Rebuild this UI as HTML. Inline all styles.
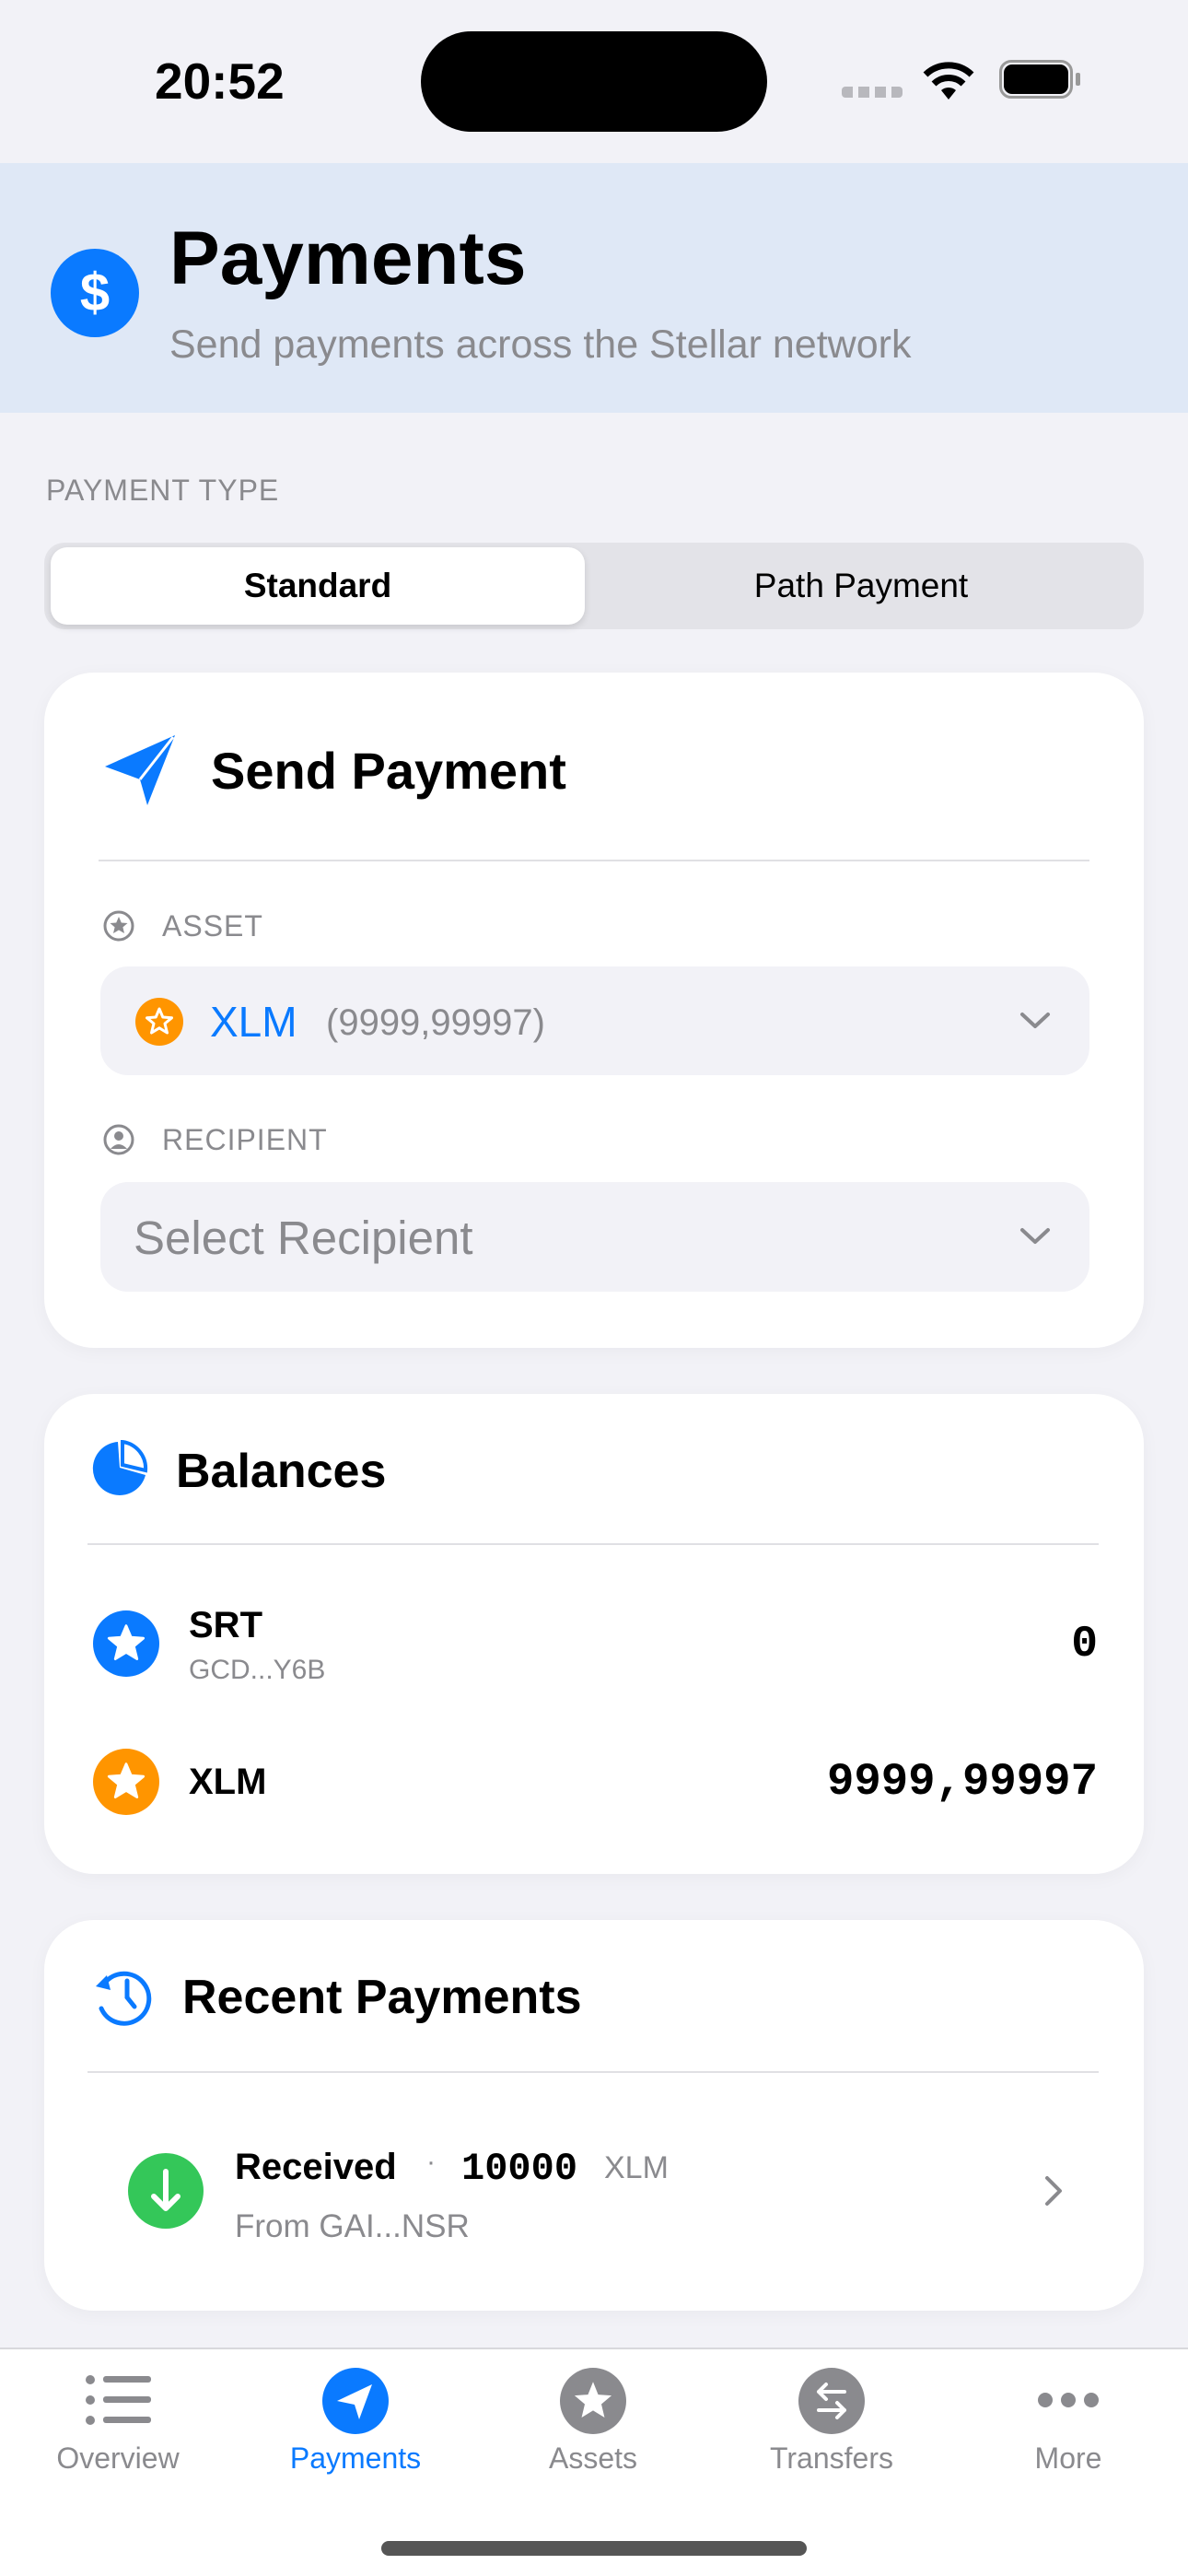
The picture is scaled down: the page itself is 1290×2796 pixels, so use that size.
<!DOCTYPE html>
<html><head><meta charset="utf-8"><style>
*{margin:0;padding:0;box-sizing:border-box}
body{width:1290px;height:2796px;background:#f2f2f7;font-family:"Liberation Sans",sans-serif;position:relative;overflow:hidden;color:#000}
.a{position:absolute}
.card{position:absolute;left:48px;width:1194px;background:#fff;border-radius:54px;box-shadow:0 4px 20px rgba(0,0,0,0.04)}
.lbl{color:#8a8a8e;font-size:32px;letter-spacing:1px}
.field{position:absolute;left:109px;width:1074px;background:#f2f2f7;border-radius:30px}
.mono{font-family:"Liberation Mono",monospace;font-weight:bold}
.tab{position:absolute;top:2650px;width:200px;text-align:center;font-size:32px;color:#8a8a8e}
</style></head><body>
<!-- status bar -->
<div class="a" style="left:168px;top:56px;font-size:55px;font-weight:bold">20:52</div>
<div class="a" style="left:457px;top:34px;width:376px;height:109px;background:#000;border-radius:55px"></div>
<div class="a" style="left:914px;top:94px;width:66px;height:12px;background:repeating-linear-gradient(90deg,#b8b8bd 0 12px,transparent 12px 18px);border-radius:4px"></div>
<svg class="a" style="left:1000px;top:64px" width="60" height="46" viewBox="0 0 60 46"><path d="M30 44 L22 34 A12 12 0 0 1 38 34 Z" fill="#000"/><path d="M14 27 A23 23 0 0 1 46 27" stroke="#000" stroke-width="7" fill="none"/><path d="M5 17 A36 36 0 0 1 55 17" stroke="#000" stroke-width="7" fill="none"/></svg>
<div class="a" style="left:1085px;top:65px;width:80px;height:42px;border:3px solid #999;border-radius:13px"></div>
<div class="a" style="left:1090px;top:70px;width:70px;height:32px;background:#000;border-radius:9px"></div>
<div class="a" style="left:1168px;top:79px;width:5px;height:14px;background:#999;border-radius:2px"></div>
<!-- header -->
<div class="a" style="left:0;top:177px;width:1290px;height:271px;background:#dfe8f6"></div>
<div class="a" style="left:55px;top:270px;width:96px;height:96px;border-radius:50%;background:#0a7aff;color:#fff;font-size:58px;font-weight:bold;text-align:center;line-height:96px">$</div>
<div class="a" style="left:184px;top:234px;font-size:82px;font-weight:bold">Payments</div>
<div class="a" style="left:184px;top:350px;font-size:43px;color:#8a8a8e">Send payments across the Stellar network</div>
<!-- segmented -->
<div class="a lbl" style="left:50px;top:514px">PAYMENT TYPE</div>
<div class="a" style="left:48px;top:589px;width:1194px;height:94px;background:#e3e3e8;border-radius:22px"></div>
<div class="a" style="left:55px;top:594px;width:580px;height:84px;background:#fff;border-radius:18px;box-shadow:0 3px 8px rgba(0,0,0,0.12);text-align:center;line-height:84px;font-size:37px;font-weight:bold">Standard</div>
<div class="a" style="left:635px;top:594px;width:600px;height:84px;text-align:center;line-height:84px;font-size:37px">Path Payment</div>
<!-- card 1 -->
<div class="card" style="top:730px;height:733px"></div>
<svg class="a" style="left:112px;top:796px" width="82" height="80" viewBox="0 0 82 80"><path d="M2 36 L78 2 L48 78 L40 50 Z" fill="#0a7aff"/><path d="M40 50 L76 4" stroke="#fff" stroke-width="3"/></svg>
<div class="a" style="left:229px;top:804px;font-size:56px;font-weight:bold">Send Payment</div>
<div class="a" style="left:107px;top:933px;width:1076px;height:2px;background:#e0e0e4"></div>
<svg class="a" style="left:111px;top:987px" width="36" height="36" viewBox="0 0 36 36"><circle cx="18" cy="18" r="15" fill="none" stroke="#8a8a8e" stroke-width="3"/><path d="M18 8 L20.8 14.5 L27.5 15 L22.4 19.4 L24 26 L18 22.5 L12 26 L13.6 19.4 L8.5 15 L15.2 14.5Z" fill="#8a8a8e"/></svg>
<div class="a lbl" style="left:176px;top:987px">ASSET</div>
<div class="field" style="top:1049px;height:118px"></div>
<svg class="a" style="left:147px;top:1083px" width="52" height="52" viewBox="0 0 52 52"><circle cx="26" cy="26" r="26" fill="#ff9500"/><path d="M26 12 L29.8 21 L39.5 21.8 L32 28 L34.5 38 L26 32.8 L17.5 38 L20 28 L12.5 21.8 L22.2 21Z" fill="none" stroke="#fff" stroke-width="3" stroke-linejoin="round"/></svg>
<div class="a" style="left:228px;top:1082px;font-size:46px;color:#0a7aff">XLM</div>
<div class="a" style="left:354px;top:1088px;font-size:40px;color:#8a8a8e">(9999,99997)</div>
<svg class="a" style="left:1106px;top:1096px" width="36" height="24" viewBox="0 0 36 24"><path d="M4 5 L18 18 L32 5" fill="none" stroke="#8a8a8e" stroke-width="4" stroke-linecap="round" stroke-linejoin="round"/></svg>
<svg class="a" style="left:111px;top:1219px" width="36" height="36" viewBox="0 0 36 36"><circle cx="18" cy="18" r="15" fill="none" stroke="#8a8a8e" stroke-width="3"/><circle cx="18" cy="14" r="5" fill="#8a8a8e"/><path d="M9 28 Q18 18 27 28" fill="#8a8a8e"/></svg>
<div class="a lbl" style="left:176px;top:1219px">RECIPIENT</div>
<div class="field" style="top:1283px;height:119px"></div>
<div class="a" style="left:145px;top:1314px;font-size:51px;color:#8a8a8e">Select Recipient</div>
<svg class="a" style="left:1106px;top:1330px" width="36" height="24" viewBox="0 0 36 24"><path d="M4 5 L18 18 L32 5" fill="none" stroke="#8a8a8e" stroke-width="4" stroke-linecap="round" stroke-linejoin="round"/></svg>
<!-- card 2 -->
<div class="card" style="top:1513px;height:521px"></div>
<svg class="a" style="left:100px;top:1563px" width="62" height="62" viewBox="0 0 62 62"><path d="M28 2 A29 29 0 1 0 58 38 L30 30 Z" fill="#0a7aff"/><path d="M33 2 L33 27 L58 33 A29 29 0 0 0 33 2Z" fill="none" stroke="#0a7aff" stroke-width="4"/></svg>
<div class="a" style="left:191px;top:1567px;font-size:52px;font-weight:bold">Balances</div>
<div class="a" style="left:95px;top:1675px;width:1098px;height:2px;background:#e0e0e4"></div>
<svg class="a" style="left:101px;top:1748px" width="72" height="72" viewBox="0 0 52 52"><circle cx="26" cy="26" r="26" fill="#0a7aff"/><path d="M26 12 L29.8 21 L39.5 21.8 L32 28 L34.5 38 L26 32.8 L17.5 38 L20 28 L12.5 21.8 L22.2 21Z" fill="#fff" stroke="#fff" stroke-width="2" stroke-linejoin="round"/></svg>
<div class="a" style="left:205px;top:1742px;font-size:40px;font-weight:bold">SRT</div>
<div class="a" style="left:205px;top:1796px;font-size:30px;color:#8a8a8e">GCD...Y6B</div>
<div class="a mono" style="right:98px;top:1758px;font-size:48px">0</div>
<svg class="a" style="left:101px;top:1898px" width="72" height="72" viewBox="0 0 52 52"><circle cx="26" cy="26" r="26" fill="#ff9500"/><path d="M26 12 L29.8 21 L39.5 21.8 L32 28 L34.5 38 L26 32.8 L17.5 38 L20 28 L12.5 21.8 L22.2 21Z" fill="#fff" stroke="#fff" stroke-width="2" stroke-linejoin="round"/></svg>
<div class="a" style="left:205px;top:1912px;font-size:40px;font-weight:bold">XLM</div>
<div class="a mono" style="right:98px;top:1906px;font-size:49px">9999,99997</div>
<!-- card 3 -->
<div class="card" style="top:2084px;height:424px"></div>
<svg class="a" style="left:100px;top:2134px" width="68" height="66" viewBox="0 0 68 66"><path d="M14 18 A27 27 0 1 1 10 46" fill="none" stroke="#0a7aff" stroke-width="5" stroke-linecap="round"/><path d="M4 22 L16 10 L20 26 Z" fill="#0a7aff"/><path d="M38 16 L38 34 L46 44" fill="none" stroke="#0a7aff" stroke-width="5" stroke-linecap="round"/></svg>
<div class="a" style="left:198px;top:2138px;font-size:52px;font-weight:bold">Recent Payments</div>
<div class="a" style="left:95px;top:2248px;width:1098px;height:2px;background:#e0e0e4"></div>
<svg class="a" style="left:139px;top:2337px" width="82" height="82" viewBox="0 0 82 82"><circle cx="41" cy="41" r="41" fill="#34c759"/><path d="M41 20 L41 60 M28 47 L41 60 L54 47" fill="none" stroke="#fff" stroke-width="6" stroke-linecap="round" stroke-linejoin="round"/></svg>
<div class="a" style="left:255px;top:2330px;font-size:40px;font-weight:bold">Received</div>
<div class="a" style="left:463px;top:2330px;font-size:30px;color:#8a8a8e">·</div>
<div class="a mono" style="left:501px;top:2330px;font-size:42px">10000</div>
<div class="a" style="left:656px;top:2334px;font-size:34px;color:#8a8a8e">XLM</div>
<div class="a" style="left:255px;top:2397px;font-size:35px;color:#8a8a8e">From GAI...NSR</div>
<svg class="a" style="left:1132px;top:2360px" width="24" height="36" viewBox="0 0 24 36"><path d="M5 4 L19 18 L5 32" fill="none" stroke="#8a8a8e" stroke-width="4" stroke-linecap="round" stroke-linejoin="round"/></svg>
<!-- tab bar -->
<div class="a" style="left:0;top:2548px;width:1290px;height:248px;background:#fff;border-top:2px solid #d8d8dc"></div>
<svg class="a" style="left:92px;top:2577px" width="74" height="56" viewBox="0 0 74 56"><g fill="#8a8a8e"><circle cx="6" cy="6" r="5"/><circle cx="6" cy="28" r="5"/><circle cx="6" cy="50" r="5"/><rect x="20" y="2" width="52" height="7" rx="3"/><rect x="20" y="24" width="52" height="7" rx="3"/><rect x="20" y="46" width="52" height="7" rx="3"/></g></svg>
<svg class="a" style="left:350px;top:2570px" width="72" height="72" viewBox="0 0 72 72"><circle cx="36" cy="36" r="36" fill="#0a7aff"/><path d="M16 36 L54 18 L40 56 L35 40 Z" fill="#fff"/></svg>
<svg class="a" style="left:608px;top:2570px" width="72" height="72" viewBox="0 0 52 52"><circle cx="26" cy="26" r="26" fill="#8a8a8e"/><path d="M26 11 L30 21 L40.5 21.8 L32.5 28.5 L35 39 L26 33.5 L17 39 L19.5 28.5 L11.5 21.8 L22 21Z" fill="#fff"/></svg>
<svg class="a" style="left:867px;top:2570px" width="72" height="72" viewBox="0 0 72 72"><circle cx="36" cy="36" r="36" fill="#8a8a8e"/><path d="M50 26 L22 26 M30 18 L22 26 L30 34 M22 46 L50 46 M42 38 L50 46 L42 54" fill="none" stroke="#fff" stroke-width="4" stroke-linecap="round" stroke-linejoin="round"/></svg>
<svg class="a" style="left:1126px;top:2594px" width="68" height="22" viewBox="0 0 68 22"><g fill="#8a8a8e"><circle cx="9" cy="11" r="8"/><circle cx="34" cy="11" r="8"/><circle cx="59" cy="11" r="8"/></g></svg>
<div class="tab" style="left:28px">Overview</div>
<div class="tab" style="left:286px;color:#0a7aff">Payments</div>
<div class="tab" style="left:544px">Assets</div>
<div class="tab" style="left:803px">Transfers</div>
<div class="tab" style="left:1060px">More</div>
<div class="a" style="left:414px;top:2758px;width:462px;height:16px;background:#555;border-radius:8px"></div>
</body></html>
